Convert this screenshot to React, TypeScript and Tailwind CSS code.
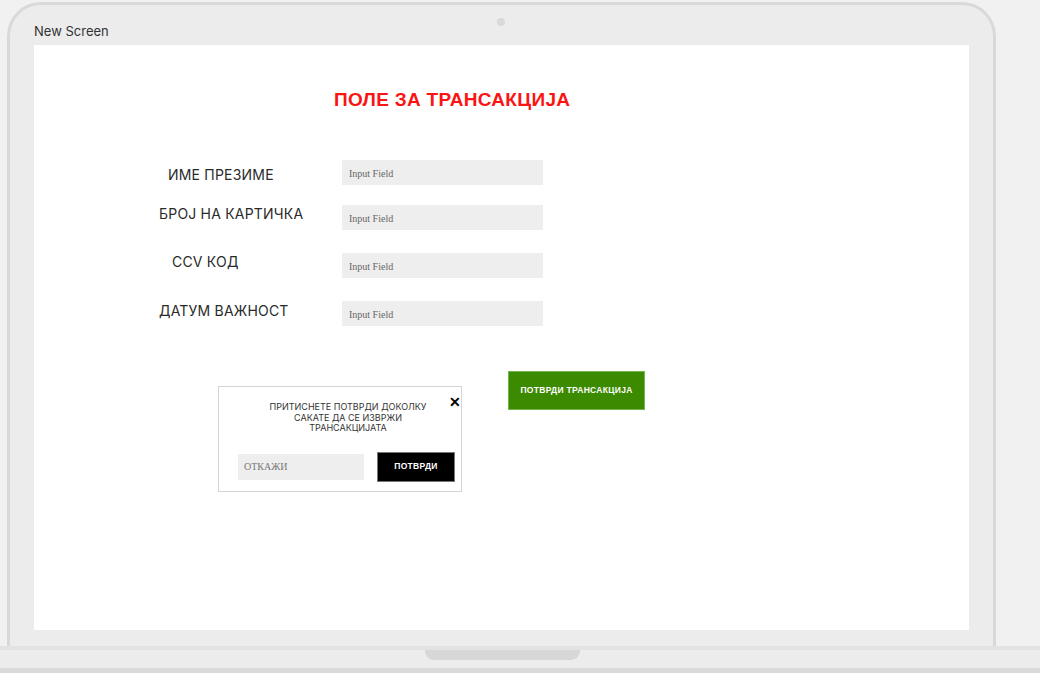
export default function App() {
  const rows = [
    { label: "ИМЕ ПРЕЗИМЕ", pl: "pl-[134px]", pt: "pt-[7px]", mt: "mt-0" },
    { label: "БРОЈ НА КАРТИЧКА", pl: "pl-[125px]", pt: "pt-[1px]", mt: "mt-[20px]" },
    { label: "CCV КОД", pl: "pl-[138px]", pt: "pt-[1px]", mt: "mt-[23px]" },
    { label: "ДАТУМ ВАЖНОСТ", pl: "pl-[125px]", pt: "pt-[2px]", mt: "mt-[23px]" },
  ];

  return (
    <div className="w-[1040px] h-[673px] overflow-hidden bg-[#f1f1f1] flex flex-col font-['Liberation_Sans',Arial,sans-serif]">
      {/* laptop lid */}
      <div className="ml-[7px] mt-[2px] w-[989px] h-[644px] rounded-t-[34px] border-[3px] border-b-0 border-[#d9d9d9] bg-[#ececec] flex flex-col">
        <div className="relative h-[40px] pl-[24px] pt-[19px]">
          <span className="block text-[13px] leading-[15px] text-[#333] font-['Inter',sans-serif]">New Screen</span>
          <span className="absolute left-[487px] top-[13px] w-[8px] h-[8px] rounded-full bg-[#d9d9d9]" />
        </div>

        {/* screen */}
        <div className="ml-[24px] w-[935px] h-[585px] bg-white pt-[44px]">
          <h1 className="pl-[300px] text-[19px] leading-[22px] font-bold tracking-[0.3px] text-[#fa1414]">
            ПОЛЕ ЗА ТРАНСАКЦИЈА
          </h1>

          <div className="mt-[49px] flex flex-col">
            {rows.map((r) => (
              <div key={r.label} className={`flex items-start ${r.mt}`}>
                <div className={`w-[308px] ${r.pl} ${r.pt}`}>
                  <span className="block text-[14px] leading-[16px] text-[#2a2a2a] tracking-[0.2px] font-['Inter',sans-serif]">
                    {r.label}
                  </span>
                </div>
                <input
                  readOnly
                  placeholder="Input Field"
                  className="w-[201px] h-[25px] bg-[#eeeeee] pl-[7px] pt-[2px] text-[10px] outline-none placeholder:text-[#666] font-['Liberation_Serif',serif]"
                />
              </div>
            ))}
          </div>

          <div className="mt-[45px] pl-[184px] flex items-start">
            {/* dialog */}
            <div className="relative mt-[15px] w-[244px] h-[106px] border border-[#d4d4d4] bg-white">
              <p className="mt-[15px] ml-[40px] w-[178px] text-center text-[9px] leading-[10.5px] text-[#333] font-['Inter',sans-serif]">
                ПРИТИСНЕТЕ ПОТВРДИ ДОКОЛКУ
                <br />
                САКАТЕ ДА СЕ ИЗВРЖИ
                <br />
                ТРАНСАКЦИЈАТА
              </p>
              <button className="absolute left-[230px] top-[8px] text-[14px] leading-[14px] font-bold text-black">
                ✕
              </button>
              <div className="mt-[18px] ml-[19px] flex items-start">
                <div className="mt-[2px] w-[126px] h-[26px] bg-[#eeeeee] pl-[6px] flex items-center text-[10px] text-[#777] font-['Liberation_Serif',serif]">
                  ОТКАЖИ
                </div>
                <button className="ml-[13px] w-[78px] h-[30px] bg-black border border-[#777] text-white text-[8.5px] font-bold tracking-[0.3px]">
                  ПОТВРДИ
                </button>
              </div>
            </div>

            <button className="ml-[46px] w-[137px] h-[39px] bg-[#3c8a00] border border-[#74b64a] text-white text-[8.5px] font-bold tracking-[0.3px]">
              ПОТВРДИ ТРАНСАКЦИЈА
            </button>
          </div>
        </div>
      </div>

      {/* laptop base */}
      <div className="h-[4px] bg-[#e2e2e2]" />
      <div className="h-[18px] bg-[#ececec] flex">
        <div className="ml-[425px] w-[155px] h-[10px] bg-[#d7d7d7] rounded-b-[9px]" />
      </div>
      <div className="flex-1 bg-[#dadada]" />
    </div>
  );
}
